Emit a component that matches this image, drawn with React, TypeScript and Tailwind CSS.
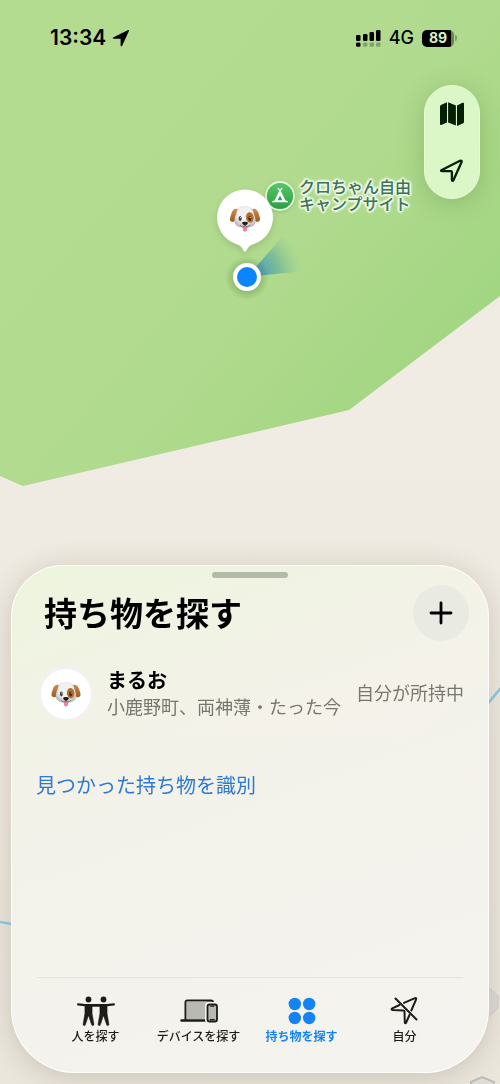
import { useState } from "react";
import clsx from "clsx";

const TABS = [
  { id: "people", label: "人を探す", Icon: PeopleIcon },
  { id: "devices", label: "デバイスを探す", Icon: DevicesIcon },
  { id: "items", label: "持ち物を探す", Icon: ItemsIcon },
  { id: "me", label: "自分", Icon: MeIcon },
];

const ITEMS = [
  { name: "まるお", place: "小鹿野町、両神薄", seen: "たった今", status: "自分が所持中" },
];

function DogFace({ className }: { className?: string }) {
  return (
    <svg className={className} viewBox="0 0 64 56" aria-hidden="true">
      <defs>
        <radialGradient id="fur" cx="0.5" cy="0.4" r="0.62">
          <stop offset="0.55" stopColor="#f3f0f0" />
          <stop offset="1" stopColor="#b9b3b5" />
        </radialGradient>
        <linearGradient id="ear" x1="0" y1="0" x2="0" y2="1">
          <stop offset="0" stopColor="#c98d50" />
          <stop offset="1" stopColor="#a05a1c" />
        </linearGradient>
      </defs>
      <path d="M13 8C8 8 5 13 3 20 1 26-1 31 3 34c4 2 8 1 10-4 2-6 2-13 5-18 1-3-2-4-5-4Z" fill="url(#ear)" />
      <path d="M51 8c5 0 8 5 10 12 2 6 4 11 0 14-4 2-8 1-10-4-2-6-2-13-5-18-1-3 2-4 5-4Z" fill="url(#ear)" />
      <path d="M32 2c9 0 15 3 17 11 1 6 5 12 5 20 0 10-10 14-22 14s-22-4-22-14c0-8 4-14 5-20C17 5 23 2 32 2Z" fill="url(#fur)" />
      <ellipse cx="42" cy="26" rx="8" ry="11" fill="#b36d2f" transform="rotate(-6 42 26)" />
      <ellipse cx="22" cy="28" rx="3.200" ry="5.200" fill="#3a4652" />
      <ellipse cx="42" cy="28" rx="3.200" ry="5.200" fill="#4a2c1c" />
      <circle cx="23" cy="26" r="1.100" fill="#fff" />
      <circle cx="43" cy="26" r="1.100" fill="#fff" />
      <path d="M27.500 44h9v5c0 4-2 6-4.500 6s-4.500-2-4.500-6Z" fill="#ee7f96" />
      <path d="M22 42c3 4 7 4 10 1 3 3 7 3 10-1" fill="none" stroke="#6d6567" strokeWidth="1.800" strokeLinecap="round" />
      <path d="M26 36c2-2 10-2 12 0 1 3-3 6-6 7-3-1-7-4-6-7Z" fill="#251b1b" />
    </svg>
  );
}

function PeopleIcon() {
  return (
    <svg className="h-8 w-10" viewBox="0 0 40 32" fill="currentColor" aria-hidden="true">
      <circle cx="12.500" cy="4.500" r="2.900" />
      <circle cx="27.500" cy="4.500" r="2.900" />
      <path d="M2.200 9.300 9 10.200h22l6.800-.9M12.500 10.500h15" fill="none" stroke="currentColor" strokeWidth="2.300" strokeLinecap="round" strokeLinejoin="round" />
      <path d="M8.900 10.500h7.200v8L17.900 29a1.200 1.200 0 0 1-2.300.7L12.700 21h-.4L9.400 29.700A1.200 1.200 0 0 1 7.100 29l1.800-10.500ZM23.900 10.500h7.200v8L32.900 29a1.200 1.200 0 0 1-2.300.7L27.700 21h-.4L24.400 29.700A1.200 1.200 0 0 1 22.100 29l1.800-10.500Z" stroke="currentColor" strokeWidth="0.500" />
    </svg>
  );
}

function DevicesIcon() {
  return (
    <svg className="h-8 w-10" viewBox="0 0 40 32" aria-hidden="true">
      <path d="M6.500 25V7.500a2 2 0 0 1 2-2H32a2 2 0 0 1 2 2V8" fill="#b9b9b3" stroke="currentColor" strokeWidth="2" />
      <path d="M7.500 6.500h20V24h-20Z" fill="#b9b9b3" />
      <path d="M2.500 25.500H26" stroke="currentColor" strokeWidth="2.500" strokeLinecap="round" />
      <rect x="26" y="7" width="13" height="21" rx="3.500" fill="#f5f3ee" />
      <rect x="28.500" y="9.500" width="9.500" height="17" rx="2" fill="#b9b9b3" stroke="currentColor" strokeWidth="1.800" />
      <path d="M31.800 11.200h3M31.300 24.600h4" stroke="currentColor" strokeWidth="1.200" strokeLinecap="round" />
    </svg>
  );
}

function ItemsIcon() {
  return (
    <svg className="h-8 w-10" viewBox="0 0 40 32" fill="currentColor" aria-hidden="true">
      <circle cx="12.800" cy="9" r="6.200" />
      <circle cx="27.200" cy="9" r="6.200" />
      <circle cx="12.800" cy="23" r="6.200" />
      <circle cx="27.200" cy="23" r="6.200" />
    </svg>
  );
}

function MeIcon() {
  return (
    <svg className="h-8 w-10" viewBox="0 0 40 32" fill="none" stroke="currentColor" strokeWidth="2" strokeLinecap="round" strokeLinejoin="round" aria-hidden="true">
      <path d="m19 7.900 11-4.700q1.600-.4 1.100 1.100L26.300 15.500M14.500 10 7.300 13.400c-1.200.6-1 1.500.3 1.500L18.500 15.500q1 0 1 1l.3 10.700c0 1.300.9 1.300 1.400.3l3.300-7.500" />
      <path d="M10.500 3.500 31.500 24.500" />
    </svg>
  );
}

function MapBackground() {
  return (
    <svg className="absolute inset-0 h-full w-full" viewBox="0 0 500 1084" preserveAspectRatio="none" aria-hidden="true">
      <defs>
        <linearGradient id="forest" gradientUnits="userSpaceOnUse" x1="120" y1="100" x2="440" y2="370">
          <stop offset="0" stopColor="#b4dc91" />
          <stop offset="0.55" stopColor="#b0da8d" />
          <stop offset="1" stopColor="#a2d682" />
        </linearGradient>
        <linearGradient id="ground" x1="0" y1="0" x2="0" y2="1">
          <stop offset="0.4" stopColor="#f0ebe3" />
          <stop offset="1" stopColor="#ebe6dc" />
        </linearGradient>
      </defs>
      <rect width="500" height="1084" fill="url(#ground)" />
      <path d="M0 0h500v296L349 410 23 486 0 476Z" fill="url(#forest)" />
      <path d="M-5 921c70 16 150-2 240-22 110-25 180-108 270-216" fill="none" stroke="#8ccbe6" strokeWidth="2.500" />
      <path d="m486 985 12 11v12l-26 24-16-12Z" fill="#dddcd9" stroke="#cfcfcc" />
      <path d="m471 1082 11-5 12 5v8h-23Z" fill="#dfddd8" stroke="#bdbdb8" strokeWidth="2" />
    </svg>
  );
}

function StatusBar() {
  return (
    <header className="relative flex items-center justify-between pt-6 pr-[43px] pl-[50px] font-['Inter',sans-serif] text-black">
      <div className="flex h-7 items-center gap-1.5">
        <span className="text-[21px] font-semibold">13:34</span>
        <svg className="h-[18px] w-[18px]" viewBox="0 0 18 18" aria-hidden="true">
          <path d="M1.500 8.200 15.700 1.200q1.800-.6 1.100 1.100L10.300 16.500c-.6 1.300-1.700 1-1.700-.3V9.700H2c-1.500 0-1.600-1-.5-1.500Z" />
        </svg>
      </div>
      <div className="flex h-7 items-center">
        <svg className="mr-2 h-[17px] w-[25px]" viewBox="0 0 25 17" aria-hidden="true">
          <rect x="0" y="5" width="4.500" height="6" rx="1.300" />
          <rect x="7" y="4" width="4.500" height="7" rx="1.300" />
          <rect x="13.500" y="2" width="4.500" height="9" rx="1.300" />
          <rect x="20" y="0" width="4.500" height="11" rx="1.300" />
          <rect x="0" y="12.500" width="4.500" height="4.200" rx="1.300" />
          <g opacity="0.25">
            <rect x="7" y="12.500" width="4.500" height="4.200" rx="1.300" />
            <rect x="13.500" y="12.500" width="4.500" height="4.200" rx="1.300" />
            <rect x="20" y="12.500" width="4.500" height="4.200" rx="1.300" />
          </g>
        </svg>
        <span className="mr-2 text-lg font-medium">4G</span>
        <span className="flex h-[17px] w-8 items-center justify-center rounded-[5px] bg-linear-to-r from-black from-90% to-[#6b8258] to-90% text-sm font-bold text-[#d8eec6]">
          89
        </span>
        <span className="ml-px h-1.5 w-0.5 rounded-r-full bg-[#7f9d68]" />
      </div>
    </header>
  );
}

function MapControls() {
  return (
    <div className="relative mt-[33px] mr-5 flex w-14 flex-col self-end rounded-full border border-[#e6fbd6] bg-[#dcf7c7] text-[#042004] shadow-[0_4px_24px_rgba(60,100,40,0.25)]">
      <button type="button" aria-label="マップの種類" className="flex h-14 items-center justify-center">
        <svg className="h-6 w-6" viewBox="0 0 24 24" fill="currentColor" aria-hidden="true">
          <path d="M0 4.500Q0 3.500.9 3L7 .3v20.200L1.300 22.900Q0 23.400 0 22ZM8.100.3l7.800 3.300v20l-7.800-3.200ZM17 3.600 22.500.8Q24 .3 24 1.700v18.100q0 1-.8 1.500L17 24Z" />
        </svg>
      </button>
      <button type="button" aria-label="現在地" className="flex h-14 items-center justify-center">
        <svg className="h-6 w-6" viewBox="0 0 24 24" fill="none" stroke="currentColor" strokeWidth="2.300" strokeLinejoin="round" aria-hidden="true">
          <path d="M1.800 12 20 2.800q2.200-.7 1.500 1.500L13.500 22c-.6 1.300-1.600 1.100-1.600-.3v-7.500q0-1-1-1H2.300c-1.400 0-1.600-.6-.5-1.200Z" />
        </svg>
      </button>
    </div>
  );
}

function MapPins() {
  return (
    <>
      <div className="absolute top-[179px] left-[265px] flex items-center gap-1">
        <svg className="h-[30px] w-[30px] drop-shadow" viewBox="0 0 30 30" aria-hidden="true">
          <defs>
            <linearGradient id="camp" x1="0" y1="0" x2="0" y2="1">
              <stop offset="0" stopColor="#55c967" />
              <stop offset="1" stopColor="#2c9d45" />
            </linearGradient>
          </defs>
          <circle cx="15" cy="15" r="14" fill="url(#camp)" stroke="#e4f5d9" strokeWidth="1.800" />
          <path d="m13.200 6.500 1.800 2.300 1.800-2.300.8.700-1.800 2.700 4.700 9.600 2.500.8v.9H7v-.9l2.500-.8 4.700-9.600-1.800-2.700Z" fill="#fff" />
          <path d="m15 14.500 2.400 4.800h-4.800Z" fill="#2fa06a" />
        </svg>
        <p className="text-base leading-[17px] font-medium whitespace-nowrap text-[#3b735a] [text-shadow:0_0_2px_#ecf8e4,0_0_3px_#ecf8e4,0_0_3px_#ecf8e4,1px_1px_1px_#ecf8e4,-1px_-1px_1px_#ecf8e4,1px_-1px_1px_#ecf8e4,-1px_1px_1px_#ecf8e4,2px_0_2px_#ecf8e4,-2px_0_2px_#ecf8e4,0_2px_2px_#ecf8e4,0_-2px_2px_#ecf8e4]">
          クロちゃん自由
          <br />
          キャンプサイト
        </p>
      </div>

      {/* heading cone and current position */}
      <svg className="absolute top-[232px] left-[217px] h-20 w-[90px]" viewBox="0 0 90 80" aria-hidden="true">
        <defs>
          <radialGradient id="cone" gradientUnits="userSpaceOnUse" cx="30" cy="45" r="56">
            <stop offset="0.2" stopColor="#3d93c4" stopOpacity="0.9" />
            <stop offset="0.600" stopColor="#5cab9f" stopOpacity="0.6" />
            <stop offset="1" stopColor="#7fc390" stopOpacity="0" />
          </radialGradient>
          <radialGradient id="halo">
            <stop offset="0.6" stopColor="#4c7434" stopOpacity="0.3" />
            <stop offset="1" stopColor="#4c7434" stopOpacity="0" />
          </radialGradient>
        </defs>
        <path d="M30 45 66 4Q84 18 87 39Z" fill="url(#cone)" />
        <circle cx="30" cy="46" r="22" fill="url(#halo)" />
        <circle cx="30" cy="45" r="14" fill="#fff" />
        <circle cx="30" cy="45" r="10" fill="#0a84ff" />
      </svg>

      <div className="absolute top-[189px] left-[217px] flex h-[65px] w-14 justify-center pt-4">
        <svg className="absolute inset-0 h-full w-full drop-shadow-md" viewBox="0 0 56 65" aria-hidden="true">
          <path d="M28 .5a28 28 0 0 1 9 54.500c-4 1.300-5.500 2.500-7.500 6.500q-1.500 2.500-3 0C24.500 57.500 23 56.300 19 55A28 28 0 0 1 28 .5Z" fill="#fff" />
        </svg>
        <DogFace className="relative h-[27px] w-8" />
      </div>
    </>
  );
}

export default function App() {
  const [tab, setTab] = useState("items");

  return (
    <div className="relative flex min-h-screen flex-col overflow-hidden bg-[#ece7de] font-['Inter','Noto_Sans_CJK_JP',sans-serif]">
      <MapBackground />
      <StatusBar />
      <MapControls />
      <MapPins />

      {/* Bottom sheet */}
      <main className="relative mx-[11px] mt-auto mb-[11px] flex flex-col rounded-t-[52px] rounded-b-[64px] border border-white/80 bg-linear-160 from-[#ecf5dc]/95 via-[#f3f2e9]/95 via-35% to-[#f5f3ef]/95 shadow-[0_4px_28px_rgba(80,70,50,0.22)] backdrop-blur-md">
        <div className="mx-auto mt-1.5 h-1.5 w-[76px] rounded-full bg-[#b5b9a7]" />

        <div className="mt-[7px] flex items-center justify-between pr-[19px] pl-8">
          <h1 className="pt-1 text-[33px] font-bold text-black">持ち物を探す</h1>
          <button type="button" aria-label="追加" className="flex h-14 w-14 items-center justify-center rounded-full bg-[#e9eae1]">
            <svg className="h-6 w-6" viewBox="0 0 24 24" stroke="#000" strokeWidth="2.800" strokeLinecap="round" aria-hidden="true">
              <path d="M12 2v20M2 12h20" />
            </svg>
          </button>
        </div>

        <ul className="mt-[26px]">
          {ITEMS.map((item) => (
            <li key={item.name} className="flex items-center pr-6 pl-[27px]">
              <div className="flex h-[54px] w-[54px] shrink-0 items-center justify-center rounded-full border-2 border-[#f1f0f4] bg-white">
                <DogFace className="h-[26px] w-[30px]" />
              </div>
              <div className="ml-3.5 min-w-0 flex-1">
                <p className="text-xl leading-7 font-bold text-black">{item.name}</p>
                <p className="text-lg leading-[26px] whitespace-nowrap text-[#77776f]">
                  {item.place}・{item.seen}
                </p>
              </div>
              <span className="text-lg whitespace-nowrap text-[#77776f]">{item.status}</span>
            </li>
          ))}
        </ul>

        <a href="#identify" className="mt-[51px] ml-6 self-start text-xl text-[#2f78d3]">
          見つかった持ち物を識別
        </a>

        <nav className="mx-[25px] mt-[177px] grid grid-cols-4 border-t border-[#e5e3dd] px-[7px] pt-[17px] pb-[27px]">
          {TABS.map(({ id, label, Icon }) => (
            <button
              key={id}
              type="button"
              onClick={() => setTab(id)}
              className={clsx(
                "flex flex-col items-center gap-0.5 text-xs whitespace-nowrap",
                tab === id ? "font-bold text-[#1484f5]" : "font-medium text-[#1c1c18]",
              )}
            >
              <Icon />
              {label}
            </button>
          ))}
        </nav>
      </main>
    </div>
  );
}
